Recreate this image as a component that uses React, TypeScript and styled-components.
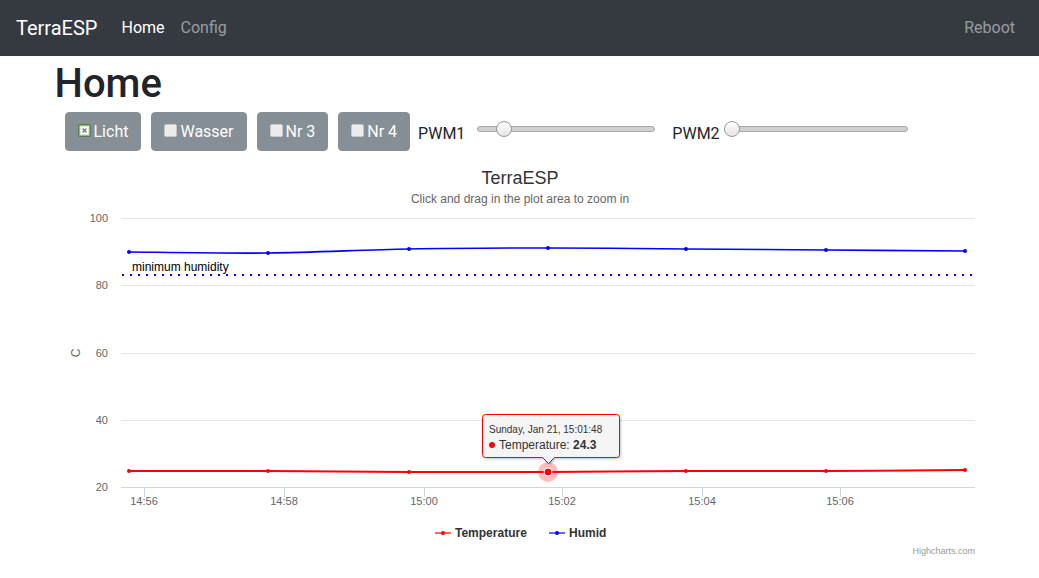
import React from "react";
import styled, { createGlobalStyle } from "styled-components";

const GlobalStyle = createGlobalStyle`
  html, body { margin: 0; padding: 0; background: #fff; }
  body {
    font-family: Roboto, "Helvetica Neue", Arial, sans-serif;
    font-size: 16px;
    line-height: 1.5;
    color: #212529;
  }
  * { box-sizing: border-box; }
`;

const NavBar = styled.nav`
  display: flex;
  align-items: center;
  height: 56px;
  padding: 8px 16px;
  background: #343a40;
`;

const Brand = styled.a`
  font-size: 20px;
  line-height: 30px;
  padding: 5px 0;
  margin-right: 16px;
  color: #fff;
  text-decoration: none;
`;

const NavList = styled.div`
  display: flex;
  flex: 1;
`;

const NavLink = styled.a<{ $active?: boolean; $push?: boolean }>`
  padding: 8px;
  line-height: 24px;
  font-size: 16px;
  color: ${(p) => (p.$active ? "#fff" : "rgba(255,255,255,0.5)")};
  text-decoration: none;
  margin-left: ${(p) => (p.$push ? "auto" : "0")};
`;

const Container = styled.main`
  width: 960px;
  margin: 0 auto;
  padding: 0 15px;
`;

const Title = styled.h1`
  margin: 4px 0 0;
  font-size: 40px;
  font-weight: 500;
  line-height: 48px;
  color: #212529;
`;

const Controls = styled.div`
  display: flex;
  align-items: flex-start;
  margin-top: 4px;
  padding-left: 10px;
`;

const ToggleButton = styled.label`
  display: flex;
  align-items: center;
  height: 39px;
  padding: 0 12px;
  margin-right: 10px;
  background: #868e96;
  border: 1px solid #868e96;
  border-radius: 4px;
  color: #fff;
  font-size: 16px;
  line-height: 24px;
`;

const Check = styled.span<{ $checked?: boolean }>`
  display: inline-flex;
  align-items: center;
  justify-content: center;
  width: 13px;
  height: 13px;
  margin: -3px 3px 0 0;
  border-radius: 2px;
  border: 1px solid ${(p) => (p.$checked ? "#5d7a4e" : "#c8c8c8")};
  background: ${(p) => (p.$checked ? "#8cbf72" : "#ececec")};
`;

const PwmLabel = styled.span<{ $before: number; $gap: number }>`
  margin-top: 10px;
  margin-left: ${(p) => p.$before}px;
  margin-right: ${(p) => p.$gap}px;
  font-size: 16px;
  line-height: 24px;
  color: #212529;
`;

const Slider = styled.div<{ $width: number; $after: number }>`
  position: relative;
  width: ${(p) => p.$width}px;
  height: 16px;
  margin-top: 9px;
  margin-right: ${(p) => p.$after}px;
`;

const Track = styled.div`
  position: absolute;
  left: 0;
  right: 0;
  top: 5px;
  height: 6px;
  border-radius: 3px;
  background: #d0d0d0;
  border: 1px solid #a9a9a9;
`;

const Thumb = styled.div<{ $left: number }>`
  position: absolute;
  top: 0;
  left: ${(p) => p.$left}px;
  width: 16px;
  height: 16px;
  border-radius: 50%;
  background: linear-gradient(#ffffff, #e4e4e4);
  border: 1px solid #9a9a9a;
`;

const ChartBox = styled.div`
  margin-top: 9px;
  width: 930px;
  height: 400px;
`;

const ChartSvg = styled.svg`
  display: block;
  font-family: "Liberation Sans", Arial, sans-serif;
`;

const xs = [74, 213, 354, 493, 631, 771, 910];
const humid = [92, 93, 89, 88, 89, 90, 91];
const temp = [311, 311, 312, 312, 311, 311, 310];

function spline(ys: number[]) {
  let d = `M ${xs[0]} ${ys[0]}`;
  for (let i = 0; i < xs.length - 1; i++) {
    const x0 = xs[Math.max(i - 1, 0)], y0 = ys[Math.max(i - 1, 0)];
    const x1 = xs[i], y1 = ys[i];
    const x2 = xs[i + 1], y2 = ys[i + 1];
    const x3 = xs[Math.min(i + 2, xs.length - 1)], y3 = ys[Math.min(i + 2, xs.length - 1)];
    const c1x = x1 + (x2 - x0) / 6, c1y = y1 + (y2 - y0) / 6;
    const c2x = x2 - (x3 - x1) / 6, c2y = y2 - (y3 - y1) / 6;
    d += ` C ${c1x} ${c1y} ${c2x} ${c2y} ${x2} ${y2}`;
  }
  return d;
}

const grid = [
  { y: 58, label: "100" },
  { y: 125, label: "80" },
  { y: 193, label: "60" },
  { y: 260, label: "40" },
  { y: 327, label: "20" },
];

const ticks = [
  { x: 89, label: "14:56" },
  { x: 229, label: "14:58" },
  { x: 369, label: "15:00" },
  { x: 507, label: "15:02" },
  { x: 647, label: "15:04" },
  { x: 785, label: "15:06" },
];

function Chart() {
  return (
    <ChartSvg width={930} height={400} viewBox="0 0 930 400">
      <defs>
        <filter id="tipShadow" x="-10%" y="-10%" width="130%" height="140%">
          <feDropShadow dx="1" dy="1" stdDeviation="1.2" floodColor="#000" floodOpacity="0.25" />
        </filter>
      </defs>
      <text x={465} y={24} textAnchor="middle" fontSize={18} fill="#333">TerraESP</text>
      <text x={465} y={43} textAnchor="middle" fontSize={12} fill="#666">
        Click and drag in the plot area to zoom in
      </text>

      {grid.map((g) => (
        <g key={g.label}>
          <line x1={66} x2={920} y1={g.y + 0.5} y2={g.y + 0.5} stroke="#e6e6e6" strokeWidth={1} />
          <text x={53} y={g.y + 4} textAnchor="end" fontSize={11} fill="#666">{g.label}</text>
        </g>
      ))}
      <text x={25} y={193} textAnchor="middle" fontSize={12} fill="#666" transform="rotate(-90 25 193)">C</text>

      <line x1={66} x2={920} y1={327.5} y2={327.5} stroke="#ccd6eb" strokeWidth={1} />
      {ticks.map((t) => (
        <g key={t.label}>
          <line x1={t.x + 0.5} x2={t.x + 0.5} y1={327} y2={337} stroke="#ccd6eb" strokeWidth={1} />
          <text x={t.x} y={345} textAnchor="middle" fontSize={11} fill="#666">{t.label}</text>
        </g>
      ))}

      <line x1={67} x2={920} y1={115} y2={115} stroke="#0000ff" strokeWidth={2} strokeDasharray="2,6" />
      <text x={77} y={111} fontSize={12} fill="#000">minimum humidity</text>

      <path d={spline(humid)} fill="none" stroke="#0000ff" strokeWidth={1.6} />
      {xs.map((x, i) => (
        <circle key={"h" + i} cx={x} cy={humid[i]} r={2} fill="#0000ff" />
      ))}
      <path d={spline(temp)} fill="none" stroke="#ff0000" strokeWidth={2} />
      {xs.map((x, i) => (
        <circle key={"t" + i} cx={x} cy={temp[i]} r={2} fill="#ff0000" />
      ))}

      <circle cx={493} cy={312} r={10} fill="#ff0000" fillOpacity={0.25} />
      <circle cx={493} cy={312} r={4} fill="#ff0000" stroke="#fff" strokeWidth={1} />

      <path
        d="M 430.5 254.5 L 561.5 254.5 Q 564.5 254.5 564.5 257.5 L 564.5 294.5 Q 564.5 297.5 561.5 297.5 L 499.5 297.5 L 493.5 303.5 L 487.5 297.5 L 430.5 297.5 Q 427.5 297.5 427.5 294.5 L 427.5 257.5 Q 427.5 254.5 430.5 254.5 Z"
        fill="rgba(247,247,247,0.9)"
        stroke="#ff0000"
        strokeWidth={1}
        filter="url(#tipShadow)"
      />
      <text x={434} y={273} fontSize={10} fill="#333">Sunday, Jan 21, 15:01:48</text>
      <circle cx={437} cy={285} r={3} fill="#ff0000" />
      <text x={444} y={289} fontSize={12} fill="#333">
        Temperature: <tspan fontWeight="bold">24.3</tspan>
      </text>

      <line x1={380} x2={396} y1={373} y2={373} stroke="#ff0000" strokeOpacity={0.6} strokeWidth={2} />
      <circle cx={388} cy={373} r={2} fill="#ff0000" />
      <text x={400} y={377} fontSize={12} fontWeight="bold" fill="#333">Temperature</text>
      <line x1={494} x2={510} y1={373} y2={373} stroke="#0000ff" strokeOpacity={0.6} strokeWidth={2} />
      <circle cx={502} cy={373} r={2} fill="#0000ff" />
      <text x={514} y={377} fontSize={12} fontWeight="bold" fill="#333">Humid</text>

      <text x={920} y={394} textAnchor="end" fontSize={9} fill="#999">Highcharts.com</text>
    </ChartSvg>
  );
}

function CheckedMark() {
  return (
    <svg width="9" height="9" viewBox="0 0 9 9">
      <rect x="0.5" y="0.5" width="8" height="8" fill="#fff" stroke="#dfe8da" />
      <path d="M2.5 2.5 L6.5 6.5 M6.5 2.5 L2.5 6.5" stroke="#777" strokeWidth="1.4" />
    </svg>
  );
}

const buttons = [
  { label: "Licht", checked: true },
  { label: "Wasser", checked: false },
  { label: "Nr 3", checked: false },
  { label: "Nr 4", checked: false },
];

export default function App() {
  return (
    <>
      <GlobalStyle />
      <NavBar>
        <Brand href="#">TerraESP</Brand>
        <NavList>
          <NavLink $active href="#">Home</NavLink>
          <NavLink href="#">Config</NavLink>
          <NavLink $push href="#">Reboot</NavLink>
        </NavList>
      </NavBar>
      <Container>
        <Title>Home</Title>
        <Controls>
          {buttons.map((b) => (
            <ToggleButton key={b.label}>
              <Check $checked={b.checked}>{b.checked && <CheckedMark />}</Check>
              {b.label}
            </ToggleButton>
          ))}
          <PwmLabel $before={-2} $gap={12}>PWM1</PwmLabel>
          <Slider $width={178} $after={17}>
            <Track />
            <Thumb $left={19} />
          </Slider>
          <PwmLabel $before={0} $gap={4}>PWM2</PwmLabel>
          <Slider $width={184} $after={0}>
            <Track />
            <Thumb $left={0} />
          </Slider>
        </Controls>
        <ChartBox>
          <Chart />
        </ChartBox>
      </Container>
    </>
  );
}
